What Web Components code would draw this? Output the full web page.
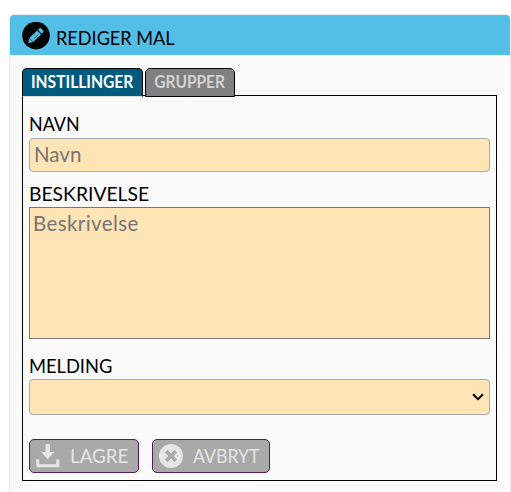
<!DOCTYPE html>
<html lang="no">
<head>
<meta charset="utf-8">
<title>Rediger mal</title>
<style>
  body {
    margin: 0;
    height: 492px;
    overflow: hidden;
    background: #fff;
    color: #000;
    font: 20px/24px Lato, "Liberation Sans", sans-serif;
    --field-bg: #ffe4b5;
  }
</style>
</head>
<body>
<edit-panel style="--squeeze: .905">
  <span slot="title">REDIGER MAL</span>
  <tab-box>
    <tab-label slot="tabs" active style="width: 121px; --squeeze: .945">INSTILLINGER</tab-label>
    <tab-label slot="tabs" style="width: 90px; --squeeze: .94">GRUPPER</tab-label>
    <form-field type="input" label="NAVN" placeholder="Navn" style="height: 70px; --squeeze: .895"></form-field>
    <form-field type="textarea" label="BESKRIVELSE" placeholder="Beskrivelse" style="height: 172px; --squeeze: .965"></form-field>
    <form-field type="select" label="MELDING" style="height: 85px; --squeeze: .915"></form-field>
    <action-bar>
      <icon-button icon="save" style="width: 110px; --squeeze: .94">LAGRE</icon-button>
      <icon-button icon="cancel" style="width: 118px; --squeeze: .885">AVBRYT</icon-button>
    </action-bar>
  </tab-box>
</edit-panel>

<script>
class EditPanel extends HTMLElement {
  constructor() {
    super();
    this.attachShadow({ mode: 'open' });
    this.shadowRoot.innerHTML = `
      <style>
        :host {
          display: block;
          box-sizing: border-box;
          width: 502px;
          height: 500px;
          margin: 14px 0 0 9px;
          border: 1px solid #ebebeb;
          border-radius: 5px;
          background: #fafafa;
          overflow: hidden;
        }
        header {
          display: flex;
          box-sizing: border-box;
          height: 40px;
          padding: 7px 12px 0;
          gap: 5.5px;
          background: #53bfe7;
        }
        svg { display: block; width: 28px; height: 28px; }
        .title {
          padding-top: 3px;
          transform: scaleX(var(--squeeze, 1));
          transform-origin: left;
        }
        .body { padding: 13px 13px 0 12px; }
      </style>
      <header>
        <svg viewBox="0 0 28 28">
          <circle cx="14" cy="13.6" r="13.8"/>
          <g fill="#53bfe7" transform="translate(6.3 20.9) rotate(-44)">
            <path d="M0 0 3.8-2.7V2.7Z"/>
            <path d="M4.2-2.7H15V2.7H4.2Z"/>
            <path d="M16-2.7h1.5q1.8 0 1.8 1.4v2.6q0 1.4-1.8 1.4H16Z"/>
            <path d="M7 .9h6" stroke="#000" stroke-width=".5"/>
          </g>
        </svg>
        <div class="title"><slot name="title"></slot></div>
      </header>
      <div class="body"><slot></slot></div>
    `;
  }
}

class TabBox extends HTMLElement {
  constructor() {
    super();
    this.attachShadow({ mode: 'open' });
    this.shadowRoot.innerHTML = `
      <style>
        :host { display: block; }
        .tabs { display: flex; gap: 2px; height: 29px; position: relative; z-index: 1; }
        .content {
          box-sizing: border-box;
          height: 386px;
          margin-top: -2px;
          padding: 6px 6px 0;
          border: 1px solid #000;
        }
      </style>
      <div class="tabs"><slot name="tabs"></slot></div>
      <div class="content"><slot></slot></div>
    `;
  }
}

class TabLabel extends HTMLElement {
  constructor() {
    super();
    this.attachShadow({ mode: 'open' });
    this.shadowRoot.innerHTML = `
      <style>
        :host {
          display: flex;
          justify-content: center;
          box-sizing: border-box;
          height: 29px;
          padding-top: 1px;
          border: 1px solid #000;
          border-radius: 5px 5px 0 0;
          background: #808080;
          color: #d3d3d3;
          font-size: 16.5px;
          font-weight: bold;
        }
        :host([active]) {
          background: #005b7f;
          color: #fff;
          border-bottom-color: #ddd;
        }
        span { transform: scaleX(var(--squeeze, 1)); }
      </style>
      <span><slot></slot></span>
    `;
  }
}

class FormField extends HTMLElement {
  constructor() {
    super();
    this.attachShadow({ mode: 'open' });
  }

  connectedCallback() {
    this.shadowRoot.innerHTML = `
      <style>
        :host { display: block; }
        label {
          display: block;
          height: 36px;
          line-height: 42px;
          transform: scaleX(var(--squeeze, 1));
          transform-origin: left;
        }
        :host([type="textarea"]) label { height: 35px; }
        :host([type="select"]) label { height: 35px; }
        input, textarea, select {
          display: block;
          box-sizing: border-box;
          width: 100%;
          margin: 0;
          border: 1px solid #a9a9a9;
          border-radius: 4px;
          background: var(--field-bg);
          color: #000;
          font: inherit;
          font-size: 20.5px;
          outline: none;
        }
        ::placeholder { color: #757575; opacity: 1; }
        input { height: 34px; padding: 0 4px 2px; }
        textarea {
          height: 132px;
          padding: 3px;
          border-color: #767676;
          border-radius: 0;
          resize: none;
          letter-spacing: .4px;
        }
        select { height: 36px; appearance: none; }
        .control { display: grid; }
        .control > * { grid-area: 1 / 1; }
        svg {
          align-self: center;
          justify-self: end;
          width: 12px;
          height: 8px;
          margin-right: 6px;
          pointer-events: none;
        }
      </style>
      <label for="control">${this.getAttribute('label')}</label>
      <div class="control">${this.getControl()}</div>
    `;
  }

  getControl() {
    const placeholder = this.getAttribute('placeholder') || '';
    switch (this.getAttribute('type')) {
      case 'textarea':
        return `<textarea id="control" placeholder="${placeholder}"></textarea>`;
      case 'select':
        return `
          <select id="control"></select>
          <svg viewBox="0 0 12 8"><path d="M1 1.3 6 6.2 11 1.3" fill="none" stroke="#000" stroke-width="2"/></svg>
        `;
      default:
        return `<input id="control" placeholder="${placeholder}">`;
    }
  }
}

class ActionBar extends HTMLElement {
  constructor() {
    super();
    this.attachShadow({ mode: 'open' });
    this.shadowRoot.innerHTML = `
      <style>
        :host { display: flex; gap: 13px; padding-top: 10px; }
      </style>
      <slot></slot>
    `;
  }
}

const ICONS = {
  save: `
    <path d="M9.6 0h4.3v8h4.4l-6.6 7.3L5.2 8h4.4z"/>
    <path d="M1.8 15.2v6.6h20v-6.6" fill="none" stroke="#e6e6e6" stroke-width="3"/>
  `,
  cancel: `
    <circle cx="12" cy="12" r="12"/>
    <path d="m7.2 7.2 9.6 9.6m0-9.6-9.6 9.6" stroke="#a9a9a9" stroke-width="3.6"/>
  `
};

class IconButton extends HTMLElement {
  constructor() {
    super();
    this.attachShadow({ mode: 'open' });
  }

  connectedCallback() {
    this.shadowRoot.innerHTML = `
      <style>
        :host { display: block; }
        button {
          display: flex;
          align-items: center;
          box-sizing: border-box;
          width: 100%;
          height: 34px;
          gap: 10px;
          padding: 0 0 0 6px;
          border: 1px solid #551a5b;
          border-radius: 5px;
          background: #a9a9a9;
          color: #e6e6e6;
          font: inherit;
        }
        svg { width: 24px; height: 24px; fill: #e6e6e6; flex: none; }
        span {
          padding-bottom: 2px;
          transform: scaleX(var(--squeeze, 1));
          transform-origin: left;
        }
      </style>
      <button type="button">
        <svg viewBox="0 0 24 24">${ICONS[this.getAttribute('icon')]}</svg>
        <span><slot></slot></span>
      </button>
    `;
  }
}

customElements.define('edit-panel', EditPanel);
customElements.define('tab-box', TabBox);
customElements.define('tab-label', TabLabel);
customElements.define('form-field', FormField);
customElements.define('action-bar', ActionBar);
customElements.define('icon-button', IconButton);
</script>
</body>
</html>
